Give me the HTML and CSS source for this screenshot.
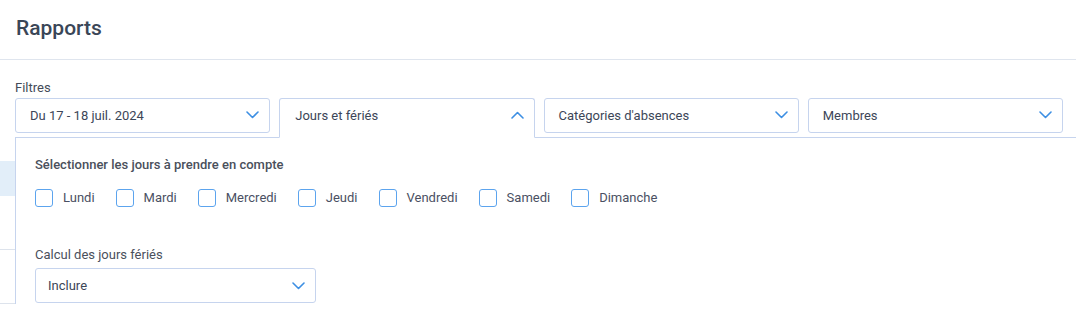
FILE: index.html
```html
<!DOCTYPE html>
<html lang="fr">
<head>
  <meta charset="UTF-8" />
  <meta name="viewport" content="width=device-width, initial-scale=1.0"/>
  <title>Rapports</title>
  <link rel="stylesheet" href="styles.css">
</head>
<body>
  <header class="pageHeader">
    <h1>Rapports</h1>
  </header>

  <section class="filters">
    <div class="filtersLabel">Filtres</div>
    <div class="filterBar">
      <div class="filterRow">
        <div class="dropdown">
          <span>Du 17 - 18 juil. 2024</span>
          <svg class="chevron" width="13" height="8" viewBox="0 0 13 8"><polyline points="1,1 6.5,6.5 12,1" /></svg>
        </div>
        <div class="dropdown open">
          <span>Jours et fériés</span>
          <svg class="chevron" width="13" height="8" viewBox="0 0 13 8"><polyline points="1,7 6.5,1.5 12,7" /></svg>
        </div>
        <div class="dropdown">
          <span>Catégories d'absences</span>
          <svg class="chevron" width="13" height="8" viewBox="0 0 13 8"><polyline points="1,1 6.5,6.5 12,1" /></svg>
        </div>
        <div class="dropdown">
          <span>Membres</span>
          <svg class="chevron" width="13" height="8" viewBox="0 0 13 8"><polyline points="1,1 6.5,6.5 12,1" /></svg>
        </div>
      </div>

      <div class="panel">
        <div class="panelTitle">Sélectionner les jours à prendre en compte</div>
        <div class="days">
          <label class="day"><span class="box"></span>Lundi</label>
          <label class="day"><span class="box"></span>Mardi</label>
          <label class="day"><span class="box"></span>Mercredi</label>
          <label class="day"><span class="box"></span>Jeudi</label>
          <label class="day"><span class="box"></span>Vendredi</label>
          <label class="day"><span class="box"></span>Samedi</label>
          <label class="day"><span class="box"></span>Dimanche</label>
        </div>

        <div class="fieldLabel">Calcul des jours fériés</div>
        <div class="select">
          <span>Inclure</span>
          <svg class="chevron" width="13" height="8" viewBox="0 0 13 8"><polyline points="1,1 6.5,6.5 12,1" /></svg>
        </div>
      </div>
    </div>
  </section>

  <div class="reportList">
    <div class="listHead"></div>
    <div class="listRow"></div>
    <div class="listRow"></div>
  </div>
</body>
</html>
```

FILE: styles.css
```css
* {
  margin: 0;
  padding: 0;
  box-sizing: border-box;
}

body {
  font-family: Roboto, "Liberation Sans", sans-serif;
  font-size: 13px;
  color: #3c4657;
  background-color: #fff;
  overflow: hidden;
}

.pageHeader {
  height: 60px;
  padding: 14px 16px 0;
  border-bottom: 1px solid #dfe5ee;
}

.pageHeader h1 {
  font-size: 21px;
  font-weight: 500;
  line-height: 28px;
  color: #3a4657;
}

.filters {
  padding: 20px 13px 0 15px;
}

.filtersLabel {
  line-height: 16px;
  margin-bottom: 2px;
  color: #444b58;
}

.filterBar {
  position: relative;
}

.filterRow {
  display: grid;
  grid-template-columns: repeat(4, 1fr);
  gap: 9px;
  align-items: start;
  height: 40px;
}

.dropdown {
  height: 35px;
  display: flex;
  align-items: center;
  justify-content: space-between;
  padding: 0 10px 1px 14px;
  border: 1px solid #c6d4ee;
  border-radius: 3px;
  background-color: #fff;
  color: #3c4658;
}

.dropdown.open {
  position: relative;
  z-index: 2;
  height: 40px;
  padding-bottom: 6px;
  padding-left: 15px;
  border-bottom-color: #fff;
  border-radius: 3px 3px 0 0;
}

.chevron {
  flex-shrink: 0;
}

.chevron polyline {
  fill: none;
  stroke: #3d8fe3;
  stroke-width: 1.6;
  stroke-linecap: round;
  stroke-linejoin: round;
}

.panel {
  position: absolute;
  z-index: 1;
  top: 39px;
  left: 0;
  right: -13px;
  height: 200px;
  background-color: #fff;
  border-top: 1px solid #c6d4ee;
  border-left: 1px solid #c6d4ee;
  padding: 19px 19px 0;
}

.panelTitle {
  font-weight: 500;
  line-height: 16px;
  color: #4a505c;
}

.days {
  display: flex;
  gap: 21px;
  margin-top: 16px;
}

.day {
  display: flex;
  align-items: center;
  gap: 10px;
  color: #4a5063;
  line-height: 18px;
}

.box {
  width: 18px;
  height: 18px;
  border: 1px solid #5ca4ee;
  border-radius: 3px;
}

.fieldLabel {
  margin-top: 40px;
  line-height: 16px;
  color: #4a505c;
}

.select {
  width: 281px;
  height: 35px;
  margin-top: 5px;
  display: flex;
  align-items: center;
  justify-content: space-between;
  padding: 0 10px 0 12px;
  border: 1px solid #c6d4ee;
  border-radius: 3px;
}

.reportList {
  margin-top: 23px;
}

.listHead {
  height: 35px;
  background-color: #e2eef9;
}

.listRow {
  height: 54px;
  border-bottom: 1px solid #dde3ec;
}
```
